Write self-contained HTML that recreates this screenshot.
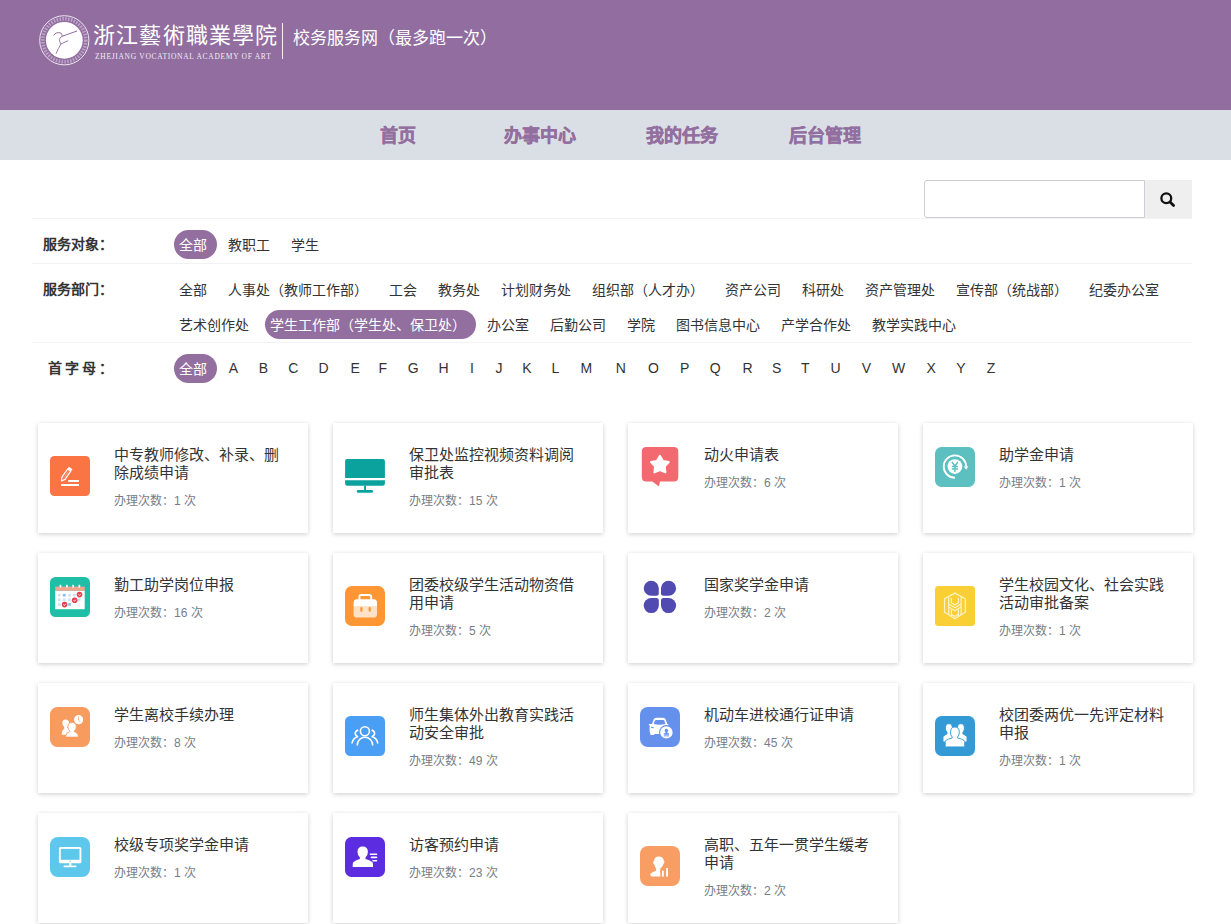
<!DOCTYPE html>
<html lang="zh-CN">
<head>
<meta charset="utf-8">
<title>校务服务网</title>
<style>
*{box-sizing:border-box}
html,body{margin:0;padding:0}
body{width:1231px;height:924px;overflow:hidden;position:relative;background:#fff;font-family:"Liberation Sans",sans-serif;color:#333}
.hdr{position:absolute;left:0;top:0;width:1231px;height:110px;background:#916DA0}
.nav{position:absolute;left:0;top:110px;width:1231px;height:50px;background:#DADFE6}
.nav a{position:absolute;top:1px;height:50px;line-height:50px;-webkit-text-stroke:0.45px #936FA0;font-size:18px;font-weight:bold;color:#936FA0;text-decoration:none;white-space:nowrap}
.logotxt{position:absolute;left:93px;top:19px;font-size:22px;font-weight:300;color:#fff;letter-spacing:1.2px;white-space:nowrap;line-height:34px}
.logoen{position:absolute;left:95px;top:51.5px;font-family:"Liberation Serif",serif;font-size:7.5px;color:#f3ecf5;letter-spacing:0.7px;white-space:nowrap;line-height:9px}
.sep{position:absolute;left:282px;top:23px;width:1px;height:36px;background:#f4eef6}
.site{position:absolute;left:293px;top:27px;font-size:17px;color:#fff;white-space:nowrap;line-height:24px}
.hl{position:absolute;left:32px;width:1160px;height:1px;background:#F2F2F2}
.search{position:absolute;left:924px;top:180px;width:221px;height:38px;border:1px solid #CDCDD3;border-radius:3px 0 0 3px;background:#fff}
.sbtn{position:absolute;left:1145px;top:180px;width:47px;height:38px;background:#EFEFEF}
.lbl{position:absolute;left:43px;font-size:14px;font-weight:bold;color:#333;white-space:nowrap;line-height:20px}
.row{position:absolute;left:174px;white-space:nowrap;font-size:0}
.row span{display:inline-block;height:29px;line-height:30px;padding:0 10px 0 5px;margin-right:6px;border-radius:15px;font-size:14px;color:#333}
.row span.on{background:#936FA0;color:#fff}
.let{position:absolute;top:354px;height:29px;line-height:29px;font-size:14px;color:#333}
.card{position:absolute;width:270px;height:110px;background:#fff;box-shadow:0 1px 4px rgba(0,0,0,.15),0 2px 7px rgba(0,0,0,.05)}
.card svg{position:absolute;left:12px;width:40px;height:40px}
.card .t{position:absolute;left:76px;top:23px;font-size:15px;line-height:18px;color:#333;white-space:nowrap}
.card .c{position:absolute;left:76px;font-size:12px;line-height:17px;color:#767D86;white-space:nowrap}
</style>
</head>
<body>
<div class="hdr">
  <svg style="position:absolute;left:38px;top:14px" width="53" height="53" viewBox="0 0 53 53">
    <circle cx="26.3" cy="26.3" r="24.6" fill="none" stroke="#efe6f2" stroke-width="1"/>
    <circle cx="26.3" cy="26.3" r="21.5" fill="none" stroke="#d8c6de" stroke-width="3.6" stroke-dasharray="1.6 1.3" opacity="0.6"/>
    <circle cx="26.3" cy="26.3" r="18.4" fill="#fff"/>
    <path d="M15.6 21.5 Q18 17.6 22.9 19 Q24.4 20.5 24.1 22.3 L39 17" fill="none" stroke="#8f6b9e" stroke-width="1"/>
    <path d="M24.1 22.3 Q19.5 24.5 22.9 30 L30.2 26.7 M22.9 30 Q20.5 34 18 39.7" fill="none" stroke="#8f6b9e" stroke-width="0.9"/>
  </svg>
  <div class="logotxt">浙江藝術職業學院</div>
  <div class="logoen">ZHEJIANG VOCATIONAL ACADEMY OF ART</div>
  <div class="sep"></div>
  <div class="site">校务服务网（最多跑一次）</div>
</div>
<div class="nav">
  <a style="left:380px">首页</a>
  <a style="left:504px">办事中心</a>
  <a style="left:646px">我的任务</a>
  <a style="left:789px">后台管理</a>
</div>

<div class="search"></div>
<div class="sbtn">
  <svg style="position:absolute;left:14px;top:11px" width="18" height="18" viewBox="0 0 18 18">
    <circle cx="7.3" cy="7.3" r="4.9" fill="none" stroke="#111" stroke-width="2.3"/>
    <path d="M11 11 L14.6 14.6" stroke="#111" stroke-width="2.8" stroke-linecap="round"/>
  </svg>
</div>

<div class="hl" style="top:218px"></div>
<div class="lbl" style="top:234px">服务对象：</div>
<div class="row" style="top:230px"><span class="on">全部</span><span>教职工</span><span>学生</span></div>
<div class="hl" style="top:263px"></div>
<div class="lbl" style="top:279px">服务部门：</div>
<div class="row" style="top:275px;width:1030px"><span>全部</span><span>人事处（教师工作部）</span><span>工会</span><span>教务处</span><span>计划财务处</span><span>组织部（人才办）</span><span>资产公司</span><span>科研处</span><span>资产管理处</span><span>宣传部（统战部）</span><span>纪委办公室</span></div>
<div class="row" style="top:310px"><span>艺术创作处</span><span class="on">学生工作部（学生处、保卫处）</span><span>办公室</span><span>后勤公司</span><span>学院</span><span>图书信息中心</span><span>产学合作处</span><span>教学实践中心</span></div>
<div class="hl" style="top:342px"></div>
<div class="lbl" style="top:358px;left:48px;letter-spacing:3px">首字母：</div>
<div class="row" style="top:354px"><span class="on">全部</span></div>
<div class="let" style="left:228.80px">A</div>
<div class="let" style="left:258.65px">B</div>
<div class="let" style="left:288.20px">C</div>
<div class="let" style="left:318.60px">D</div>
<div class="let" style="left:350.40px">E</div>
<div class="let" style="left:378.60px">F</div>
<div class="let" style="left:407.70px">G</div>
<div class="let" style="left:438.60px">H</div>
<div class="let" style="left:470.00px">I</div>
<div class="let" style="left:495.45px">J</div>
<div class="let" style="left:522.20px">K</div>
<div class="let" style="left:551.40px">L</div>
<div class="let" style="left:580.60px">M</div>
<div class="let" style="left:615.80px">N</div>
<div class="let" style="left:648.00px">O</div>
<div class="let" style="left:680.10px">P</div>
<div class="let" style="left:709.70px">Q</div>
<div class="let" style="left:742.50px">R</div>
<div class="let" style="left:772.00px">S</div>
<div class="let" style="left:801.00px">T</div>
<div class="let" style="left:830.60px">U</div>
<div class="let" style="left:861.70px">V</div>
<div class="let" style="left:892.10px">W</div>
<div class="let" style="left:926.60px">X</div>
<div class="let" style="left:956.20px">Y</div>
<div class="let" style="left:986.80px">Z</div>

<div class="card" style="left:38px;top:423px"><svg viewBox="0 0 40 40" style="top:33px"><rect width="40" height="40" rx="4.5" fill="#FA7444"/>
<g transform="translate(11.4,25.2) rotate(-55)">
<path d="M0.2 0 L3.6 -1.9 L13.6 -1.9 L13.6 1.9 L3.6 1.9 Z" fill="none" stroke="#fff" stroke-width="1.2" stroke-linejoin="round"/>
<rect x="13.6" y="-2.2" width="2.6" height="4.4" fill="#fff"/>
<path d="M4.5 0 L13 0" stroke="#fff" stroke-width="0.6" stroke-dasharray="1 1"/>
</g>
<rect x="18.2" y="24" width="10.7" height="2" fill="#fff"/>
<rect x="11.1" y="28" width="17.8" height="2" fill="#fff"/></svg><div class="t">中专教师修改、补录、删<br>除成绩申请</div><div class="c" style="top:70px">办理次数：1 次</div></div>
<div class="card" style="left:333px;top:423px"><svg viewBox="0 0 40 40" style="top:33px"><path d="M0.1 5 Q0.1 2.9 2.2 2.9 L37.8 2.9 Q39.9 2.9 39.9 5 L39.9 21.9 L0.1 21.9 Z" fill="#0BA29E"/>
<path d="M0.1 24.3 L39.9 24.3 L39.9 27.4 Q39.9 29.7 37.6 29.7 L2.4 29.7 Q0.1 29.7 0.1 27.4 Z" fill="#0BA29E"/>
<rect x="19.1" y="29.5" width="1.9" height="5" fill="#0BA29E"/>
<rect x="11.8" y="34" width="16.2" height="2.7" rx="1.3" fill="#0BA29E"/></svg><div class="t">保卫处监控视频资料调阅<br>审批表</div><div class="c" style="top:70px">办理次数：15 次</div></div>
<div class="card" style="left:628px;top:423px"><svg viewBox="0 0 40 40" style="top:24px"><path d="M6.3 0.1 L33.8 0.1 Q38.3 0.1 38.3 4.6 L38.3 30 Q38.3 34.5 33.8 34.5 L19.9 34.5 L19 39.6 L12.3 34.5 L6.3 34.5 Q1.8 34.5 1.8 30 L1.8 4.6 Q1.8 0.1 6.3 0.1 Z" fill="#F26A70"/>
<path d="M19.9 8.8 L22.9 13.9 L28.8 15.1 L24.8 19.4 L25.4 25.4 L19.9 23 L14.4 25.4 L15 19.4 L11 15.1 L16.9 13.9 Z" fill="#fff" stroke="#fff" stroke-width="2" stroke-linejoin="round"/></svg><div class="t">动火申请表</div><div class="c" style="top:52px">办理次数：6 次</div></div>
<div class="card" style="left:923px;top:423px"><svg viewBox="0 0 40 40" style="top:24px"><rect width="40" height="40" rx="6.5" fill="#5CBFC0"/>
<circle cx="19.9" cy="19.6" r="7.4" fill="#fff"/>
<path d="M19.9 30.8 A11.2 11.2 0 1 1 31.1 19.6" fill="none" stroke="#fff" stroke-width="1.9"/>
<path d="M28.8 19.4 L31.2 22.8 L33.4 19.2 Z" fill="#fff"/>
<path d="M16.9 15 L19.9 19 L22.9 15 M19.9 19 L19.9 25 M16.8 19.5 L23 19.5 M16.8 22 L23 22" fill="none" stroke="#5CBFC0" stroke-width="1.4"/></svg><div class="t">助学金申请</div><div class="c" style="top:52px">办理次数：1 次</div></div>
<div class="card" style="left:38px;top:553px"><svg viewBox="0 0 40 40" style="top:24px"><rect width="40" height="40" rx="5.5" fill="#1FBFA7"/>
<rect x="5.2" y="13.6" width="29.5" height="18.6" fill="#fff"/>
<rect x="5.2" y="9.6" width="29.5" height="4.2" fill="#F0A58E"/>
<rect x="9.6" y="7.8" width="1.7" height="2.8" fill="#fff"/><rect x="16" y="7.8" width="1.7" height="2.8" fill="#fff"/><rect x="22.3" y="7.8" width="1.7" height="2.8" fill="#fff"/><rect x="28.5" y="7.8" width="1.7" height="2.8" fill="#fff"/>
<g fill="#CFE2F3"><rect x="7.9" y="16.8" width="2.7" height="2.7"/><rect x="18.2" y="16.8" width="2.7" height="2.7"/><rect x="23" y="16.8" width="2.7" height="2.7"/>
<rect x="7.9" y="21.4" width="2.7" height="2.7"/><rect x="12.8" y="21.4" width="2.7" height="2.7"/><rect x="18.2" y="21.4" width="2.7" height="2.7"/><rect x="27.7" y="21.4" width="2.7" height="2.7"/>
<rect x="7.9" y="26.1" width="2.7" height="2.7"/></g>
<g fill="#8EBDEA"><rect x="12.8" y="16.8" width="2.9" height="2.7"/><rect x="18.2" y="26.1" width="2.7" height="2.7"/></g>
<g fill="#E2434F"><circle cx="29.5" cy="17.6" r="2.8"/><circle cx="24.7" cy="23.3" r="2.8"/><circle cx="14.6" cy="27.6" r="2.8"/></g>
<path d="M28.3 17.4 L29.4 18.6 L30.7 16.8 M23.5 23.1 L24.6 24.3 L25.9 22.5 M13.4 27.4 L14.5 28.6 L15.8 26.8" fill="none" stroke="#fff" stroke-width="0.8"/></svg><div class="t">勤工助学岗位申报</div><div class="c" style="top:52px">办理次数：16 次</div></div>
<div class="card" style="left:333px;top:553px"><svg viewBox="0 0 40 40" style="top:33px"><rect width="40" height="40" rx="7" fill="#FD9633"/>
<path d="M14.4 13.5 L14.4 11 Q14.4 9.1 16.3 9.1 L24.3 9.1 Q26.2 9.1 26.2 11 L26.2 13.5" fill="none" stroke="#fff" stroke-width="2"/>
<path d="M8.6 16.6 Q8.6 13.2 12 13.2 L28.6 13.2 Q32 13.2 32 16.6 L32 20.8 L8.6 20.8 Z" fill="#fff"/>
<path d="M8.6 20.8 L32 20.8 L32 28.2 Q32 31.6 28.6 31.6 L12 31.6 Q8.6 31.6 8.6 28.2 Z" fill="#FFE2C6"/>
<rect x="15.3" y="21" width="2.2" height="4.8" rx="1.1" fill="#FD9633"/><rect x="23.6" y="21" width="2.2" height="4.8" rx="1.1" fill="#FD9633"/></svg><div class="t">团委校级学生活动物资借<br>用申请</div><div class="c" style="top:70px">办理次数：5 次</div></div>
<div class="card" style="left:628px;top:553px"><svg viewBox="0 0 40 40" style="top:24px"><g fill="#504AB1">
<path d="M3.7 11.25 A7.55 7.55 0 0 1 18.8 11.25 L18.8 16.3 Q18.8 18.8 16.3 18.8 L11.25 18.8 A7.55 7.55 0 0 1 3.7 11.25 Z"/>
<path d="M36.1 11.25 A7.55 7.55 0 0 0 21 11.25 L21 16.3 Q21 18.8 23.5 18.8 L28.55 18.8 A7.55 7.55 0 0 0 36.1 11.25 Z"/>
<path d="M3.7 28.55 A7.55 7.55 0 0 0 18.8 28.55 L18.8 23.5 Q18.8 21 16.3 21 L11.25 21 A7.55 7.55 0 0 0 3.7 28.55 Z"/>
<path d="M36.1 28.55 A7.55 7.55 0 0 1 21 28.55 L21 23.5 Q21 21 23.5 21 L28.55 21 A7.55 7.55 0 0 1 36.1 28.55 Z"/>
</g></svg><div class="t">国家奖学金申请</div><div class="c" style="top:52px">办理次数：2 次</div></div>
<div class="card" style="left:923px;top:553px"><svg viewBox="0 0 40 40" style="top:33px"><rect width="40" height="40" rx="3.5" fill="#F9CF35"/>
<g fill="none" stroke="#FFF4C6" stroke-width="1.2" stroke-linejoin="round">
<path d="M19.9 7.1 L30.3 12.7 L30.3 26.2 L19.9 32.7 L9.5 26.2 L9.5 12.7 Z"/>
<path d="M13.7 11.3 L13.7 28.8 M26.1 11.3 L26.1 28.8"/>
<path d="M13.7 17.9 L19.9 21.7 L26.1 17.9"/>
<path d="M16.4 12 L16.4 16.8 L19.9 18.9 L23.4 16.8 L23.4 12"/>
<path d="M13.7 21 L19.9 24.8 L26.1 21"/>
<path d="M16.4 23.4 L16.4 30.4 M23.4 23.4 L23.4 30.4"/>
<path d="M16.4 28.2 L19.9 30.4 L23.4 28.2"/>
</g></svg><div class="t">学生校园文化、社会实践<br>活动审批备案</div><div class="c" style="top:70px">办理次数：1 次</div></div>
<div class="card" style="left:38px;top:683px"><svg viewBox="0 0 40 40" style="top:24px"><rect width="40" height="40" rx="7.5" fill="#F79B5F"/>
<circle cx="28.6" cy="12.7" r="4.6" fill="#fff"/>
<path d="M28.5 9.6 L28.5 13.2 L30.4 14.9" fill="none" stroke="#F79B5F" stroke-width="0.7"/>
<path d="M15.6 12.4 Q19 12.4 19 16.1 Q19 18.6 17.2 20.1 L17.2 20.7 Q19.9 21.4 20.4 22.6 L20.4 27.7 L11.5 27.7 Q11.5 23.6 14.2 21.5 L14.2 20.1 Q12.3 18.6 12.3 16.1 Q12.3 12.4 15.6 12.4 Z" fill="#fff"/>
<path d="M22.1 15.5 Q26.3 15.5 26.3 19.8 Q26.3 22.5 24.4 24.1 L24.4 24.8 Q28.2 25.6 28.2 29.2 L28.2 30.1 L15.8 30.1 L15.8 29.2 Q15.8 25.6 19.8 24.8 L19.8 24.1 Q17.9 22.5 17.9 19.8 Q17.9 15.5 22.1 15.5 Z" fill="#fff" stroke="#F79B5F" stroke-width="0.8"/></svg><div class="t">学生离校手续办理</div><div class="c" style="top:52px">办理次数：8 次</div></div>
<div class="card" style="left:333px;top:683px"><svg viewBox="0 0 40 40" style="top:33px"><rect width="40" height="40" rx="5.5" fill="#4A9FF5"/>
<g fill="none" stroke="#fff" stroke-width="1.6" stroke-linecap="round">
<circle cx="19.9" cy="15.2" r="4.5"/>
<path d="M12.3 28.9 A7.65 7.65 0 0 1 27.6 28.9"/>
<path d="M12.6 14.2 Q10 15.5 10.2 17.6 Q10.5 19.6 12.3 20.3"/>
<path d="M12.6 20.8 Q8.2 22 7.1 26.9"/>
<path d="M27.2 14.2 Q29.8 15.5 29.6 17.6 Q29.3 19.6 27.5 20.3"/>
<path d="M27.2 20.8 Q31.6 22 32.7 26.9"/>
</g></svg><div class="t">师生集体外出教育实践活<br>动安全审批</div><div class="c" style="top:70px">办理次数：49 次</div></div>
<div class="card" style="left:628px;top:683px"><svg viewBox="0 0 40 40" style="top:24px"><rect width="40" height="40" rx="8" fill="#6591EC"/>
<path d="M12 17 L13.6 12.5 Q14.3 10.7 16.3 10.7 L23 10.7 Q25 10.7 25.7 12.5 L27.3 17 L28.3 17 L28.3 18.2 L27.6 18.6 Q28 19.5 28 21 L28 24.7 L25.6 26.9 L14.2 26.9 L14.2 27.9 L10.4 27.9 L10.2 25.8 Q9.6 25.2 9.6 24 L9.6 21 Q9.6 19.5 10 18.6 L8.9 18.2 L8.9 17 Z" fill="#fff"/>
<path d="M13.6 17.1 L15 13.4 Q15.3 12.9 16 12.9 L23.3 12.9 Q24 12.9 24.3 13.4 L25.4 17.1 Q19.5 18.3 13.6 17.1 Z" fill="#6591EC"/>
<path d="M11.2 19.6 L14 20.6 L13.5 21.3 L11.2 20.9 Z" fill="#6591EC"/>
<circle cx="26.4" cy="25.4" r="7.3" fill="#6591EC"/>
<circle cx="26.4" cy="25.4" r="6.2" fill="#fff"/>
<path d="M25.4 26.2 L25.4 25 Q24.6 24.3 24.6 23.4 Q24.6 21.8 26.4 21.8 Q28.2 21.8 28.2 23.4 Q28.2 24.3 27.4 25 L27.4 26.2 L29 26.2 L29 27.8 L23.8 27.8 L23.8 26.2 Z" fill="#6591EC"/>
<rect x="23.8" y="28.4" width="5.2" height="0.9" fill="#6591EC"/></svg><div class="t">机动车进校通行证申请</div><div class="c" style="top:52px">办理次数：45 次</div></div>
<div class="card" style="left:923px;top:683px"><svg viewBox="0 0 40 40" style="top:33px"><rect width="40" height="40" rx="6.5" fill="#349AD6"/>
<g fill="#fff" stroke="#349AD6" stroke-width="0.9">
<path d="M13.9 7.7 Q17.4 7.7 17.4 12 Q17.4 14.8 15.9 16.3 L15.9 17.8 Q18.6 18.6 19.6 19.6 L19.6 26 L8 26 L8 20.5 Q10 18.8 12 17.9 L12 16.3 Q10.4 14.8 10.4 12 Q10.4 7.7 13.9 7.7 Z"/>
<path d="M25.9 7.7 Q29.4 7.7 29.4 12 Q29.4 14.8 27.9 16.3 L27.9 17.9 Q29.9 18.8 32 20.5 L32 26 L20.2 26 L20.2 19.6 Q21.2 18.6 23.9 17.8 L23.9 16.3 Q22.4 14.8 22.4 12 Q22.4 7.7 25.9 7.7 Z"/>
<path d="M19.9 11 Q24.3 11 24.3 16.3 Q24.3 19.3 22.6 21 L22.6 22 Q26.5 22.8 29 24.4 Q29.7 25 29.7 26.5 L29.7 30.9 L10.2 30.9 L10.2 26.5 Q10.2 25 10.9 24.4 Q13.4 22.8 17.2 22 L17.2 21 Q15.5 19.3 15.5 16.3 Q15.5 11 19.9 11 Z"/>
</g></svg><div class="t">校团委两优一先评定材料<br>申报</div><div class="c" style="top:70px">办理次数：1 次</div></div>
<div class="card" style="left:38px;top:813px"><svg viewBox="0 0 40 40" style="top:24px"><rect width="40" height="40" rx="8" fill="#5DC7EC"/>
<rect x="8.9" y="10.1" width="22.5" height="16.2" rx="1.6" fill="#fff"/>
<rect x="10.8" y="11.9" width="18.7" height="10.9" fill="#5DC7EC"/>
<circle cx="20.2" cy="24.4" r="0.6" fill="#5DC7EC"/>
<rect x="19.2" y="26" width="2.2" height="3" fill="#fff"/>
<rect x="13.5" y="28.6" width="13" height="1.7" rx="0.8" fill="#fff"/></svg><div class="t">校级专项奖学金申请</div><div class="c" style="top:52px">办理次数：1 次</div></div>
<div class="card" style="left:333px;top:813px"><svg viewBox="0 0 40 40" style="top:24px"><rect width="40" height="40" rx="6.5" fill="#5C2CE0"/>
<path d="M17.7 9.6 Q22.9 9.6 22.9 15.1 Q22.9 18.6 20.5 20.6 L20.5 22 Q24.6 23 27.2 25 Q28 25.7 28 27.4 L28 29.9 L7.7 29.9 L7.7 27.4 Q7.7 25.7 8.5 25 Q11 23 14.9 22 L14.9 20.6 Q12.5 18.6 12.5 15.1 Q12.5 9.6 17.7 9.6 Z" fill="#fff"/>
<g stroke="#fff" stroke-width="1.6" stroke-linecap="round"><path d="M25.4 17.2 L31.5 17.2"/><path d="M26.5 20.4 L31.5 20.4"/><path d="M28 23.7 L31.5 23.7"/></g></svg><div class="t">访客预约申请</div><div class="c" style="top:52px">办理次数：23 次</div></div>
<div class="card" style="left:628px;top:813px"><svg viewBox="0 0 40 40" style="top:33px"><rect width="40" height="40" rx="8" fill="#F89D63"/>
<path d="M18.8 10.6 Q23.2 10.6 23.8 14.5 Q24.6 15.5 24.4 16.4 Q23.4 17.6 22.9 19.4 Q21.6 21.6 20.2 22.4 L20.2 26 L20.4 30.6 L12.2 30.6 Q10.2 30.6 10.2 28.8 Q10.2 27 12.6 26.2 Q15.4 25.4 16.2 24.6 Q16.4 23.4 15.5 21.6 Q14.8 19.8 14.1 18.2 L13.1 17 Q13.3 15.8 14 14.7 Q14.6 10.6 18.8 10.6 Z" fill="#fff"/>
<rect x="22" y="24.7" width="1.8" height="5.9" fill="#fff"/>
<rect x="26.1" y="22" width="1.9" height="8.6" fill="#fff"/></svg><div class="t">高职、五年一贯学生缓考<br>申请</div><div class="c" style="top:70px">办理次数：2 次</div></div>
</body>
</html>
